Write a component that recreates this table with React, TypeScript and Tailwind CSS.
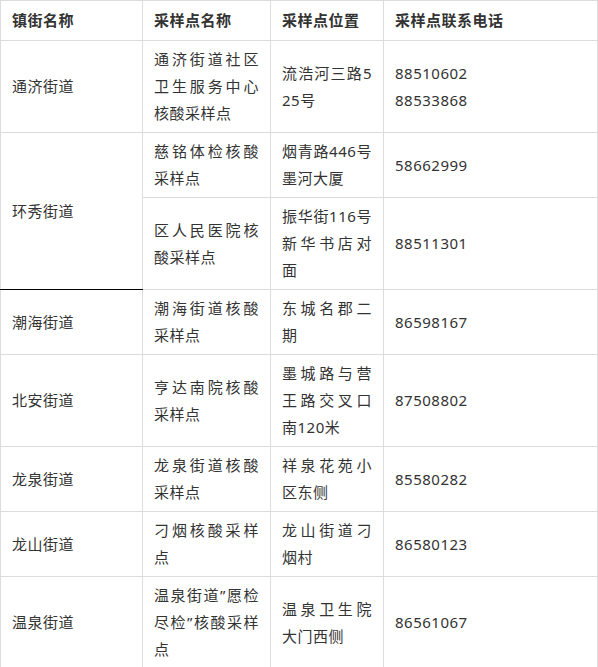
import React from "react";

type Row = {
  town?: string;
  townRowSpan?: number;
  townBlackBottom?: boolean;
  name: string;
  place: string;
  phone: string[];
};

const rows: Row[] = [
  { town: "通济街道", name: "通济街道社区卫生服务中心核酸采样点", place: "流浩河三路525号", phone: ["88510602", "88533868"] },
  { town: "环秀街道", townRowSpan: 2, townBlackBottom: true, name: "慈铭体检核酸采样点", place: "烟青路446号墨河大厦", phone: ["58662999"] },
  { name: "区人民医院核酸采样点", place: "振华街116号新华书店对面", phone: ["88511301"] },
  { town: "潮海街道", name: "潮海街道核酸采样点", place: "东城名郡二期", phone: ["86598167"] },
  { town: "北安街道", name: "亨达南院核酸采样点", place: "墨城路与营王路交叉口南120米", phone: ["87508802"] },
  { town: "龙泉街道", name: "龙泉街道核酸采样点", place: "祥泉花苑小区东侧", phone: ["85580282"] },
  { town: "龙山街道", name: "刁烟核酸采样点", place: "龙山街道刁烟村", phone: ["86580123"] },
  { town: "温泉街道", name: "温泉街道”愿检尽检”核酸采样点", place: "温泉卫生院大门西侧", phone: ["86561067"] },
];

const cell = "border border-[#dcdcdc] px-[11px] py-[5px] align-middle";
const head = "border border-[#dcdcdc] px-[11px] py-[6px] align-middle text-left font-bold";

export default function App() {
  return (
    <div
      className="bg-white w-[598px] h-[667px] overflow-hidden text-[15px] leading-[27px] tracking-[0.5px] text-[#333]"
      style={{ fontFamily: '"Noto Sans", "Noto Sans CJK SC", sans-serif' }}
    >
      <table className="table-fixed border-collapse w-[597px]">
        <colgroup>
          <col className="w-[142px]" />
          <col className="w-[128px]" />
          <col className="w-[113px]" />
          <col className="w-[214px]" />
        </colgroup>
        <thead>
          <tr>
            <th className={head}>镇街名称</th>
            <th className={head}>采样点名称</th>
            <th className={head}>采样点位置</th>
            <th className={head}>采样点联系电话</th>
          </tr>
        </thead>
        <tbody>
          {rows.map((r, i) => (
            <tr key={i}>
              {r.town && (
                <td
                  rowSpan={r.townRowSpan}
                  className={`${cell} text-left ${r.townBlackBottom ? "border-b-black" : ""}`}
                >
                  {r.town}
                </td>
              )}
              <td className={`${cell} text-justify break-all`}>{r.name}</td>
              <td className={`${cell} text-justify break-all`}>{r.place}</td>
              <td className={`${cell} text-left`}>
                {r.phone.map((p, j) => (
                  <div key={j}>{p}</div>
                ))}
              </td>
            </tr>
          ))}
        </tbody>
      </table>
    </div>
  );
}
